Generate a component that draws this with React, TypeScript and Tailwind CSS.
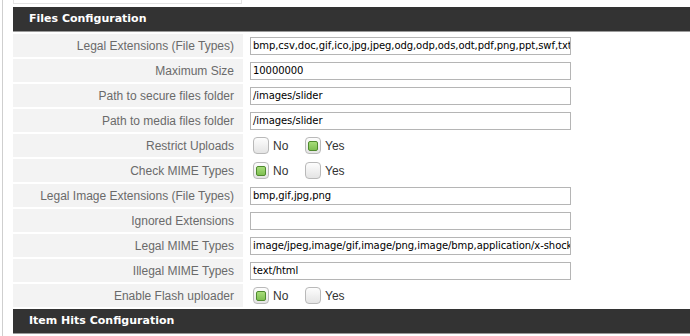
import React from "react";

type Row =
  | { label: string; kind: "text"; value: string }
  | { label: string; kind: "radio"; value: "No" | "Yes" };

const rows: Row[] = [
  {
    label: "Legal Extensions (File Types)",
    kind: "text",
    value: "bmp,csv,doc,gif,ico,jpg,jpeg,odg,odp,ods,odt,pdf,png,ppt,swf,txt",
  },
  { label: "Maximum Size", kind: "text", value: "10000000" },
  { label: "Path to secure files folder", kind: "text", value: "/images/slider" },
  { label: "Path to media files folder", kind: "text", value: "/images/slider" },
  { label: "Restrict Uploads", kind: "radio", value: "Yes" },
  { label: "Check MIME Types", kind: "radio", value: "No" },
  { label: "Legal Image Extensions (File Types)", kind: "text", value: "bmp,gif,jpg,png" },
  { label: "Ignored Extensions", kind: "text", value: "" },
  {
    label: "Legal MIME Types",
    kind: "text",
    value: "image/jpeg,image/gif,image/png,image/bmp,application/x-shockwave-flash",
  },
  { label: "Illegal MIME Types", kind: "text", value: "text/html" },
  { label: "Enable Flash uploader", kind: "radio", value: "No" },
];

function Check({ on }: { on: boolean }) {
  return (
    <span className="flex h-[17px] w-[16px] items-center justify-center rounded-[4px] border border-[#b9b9b9] bg-gradient-to-b from-[#fdfdfd] to-[#e4e4e4]">
      {on && (
        <span className="h-[10px] w-[10px] rounded-[2px] border border-[#4f8a2e] bg-gradient-to-b from-[#a6dc78] to-[#7fbf52]" />
      )}
    </span>
  );
}

function Header({ title }: { title: string }) {
  return (
    <div className="flex h-[25px] items-center border-b border-[#9a9a9a] bg-[#333333] pl-4">
      <span className="font-['DejaVu_Sans',sans-serif] text-[11px] font-bold text-white">
        {title}
      </span>
    </div>
  );
}

export default function App() {
  return (
    <div className="h-[336px] w-[690px] overflow-hidden bg-white pl-[2px]">
      <div className="flex h-full flex-col border-l border-[#cfcfcf] pl-[10px]">
        {/* previous row, cut off */}
        <div className="h-[4px] w-[229px] border-x border-b border-[#e3e3e3] bg-white" />
        <div className="mt-[3px]">
          <Header title="Files Configuration" />
        </div>

        <div className="mt-[2px] flex flex-col gap-[2px]">
          {rows.map((r) => (
            <div key={r.label} className="flex h-[23px] items-center">
              <div className="flex h-full w-[230px] items-center justify-end bg-[#f3f3f3] pr-[9px] font-['Liberation_Sans',Arial,sans-serif] text-[12px] text-[#6a6a6a]">
                {r.label}
              </div>
              <div className="flex items-center pl-[7px]">
                {r.kind === "text" ? (
                  <div className="h-[18px] w-[321px] overflow-hidden whitespace-nowrap border border-[#b5b5b5] bg-white pl-[2px] font-['DejaVu_Sans',sans-serif] text-[10px] leading-[16px] tracking-[-0.07px] text-black">
                    {r.value}
                  </div>
                ) : (
                  <div className="flex items-center pl-[3px] font-['Liberation_Sans',Arial,sans-serif] text-[12px] text-[#333]">
                    <Check on={r.value === "No"} />
                    <span className="ml-[4px] w-[32px]">No</span>
                    <Check on={r.value === "Yes"} />
                    <span className="ml-[4px]">Yes</span>
                  </div>
                )}
              </div>
            </div>
          ))}
        </div>

        <div className="mt-[2px]">
          <Header title="Item Hits Configuration" />
        </div>
      </div>
    </div>
  );
}
